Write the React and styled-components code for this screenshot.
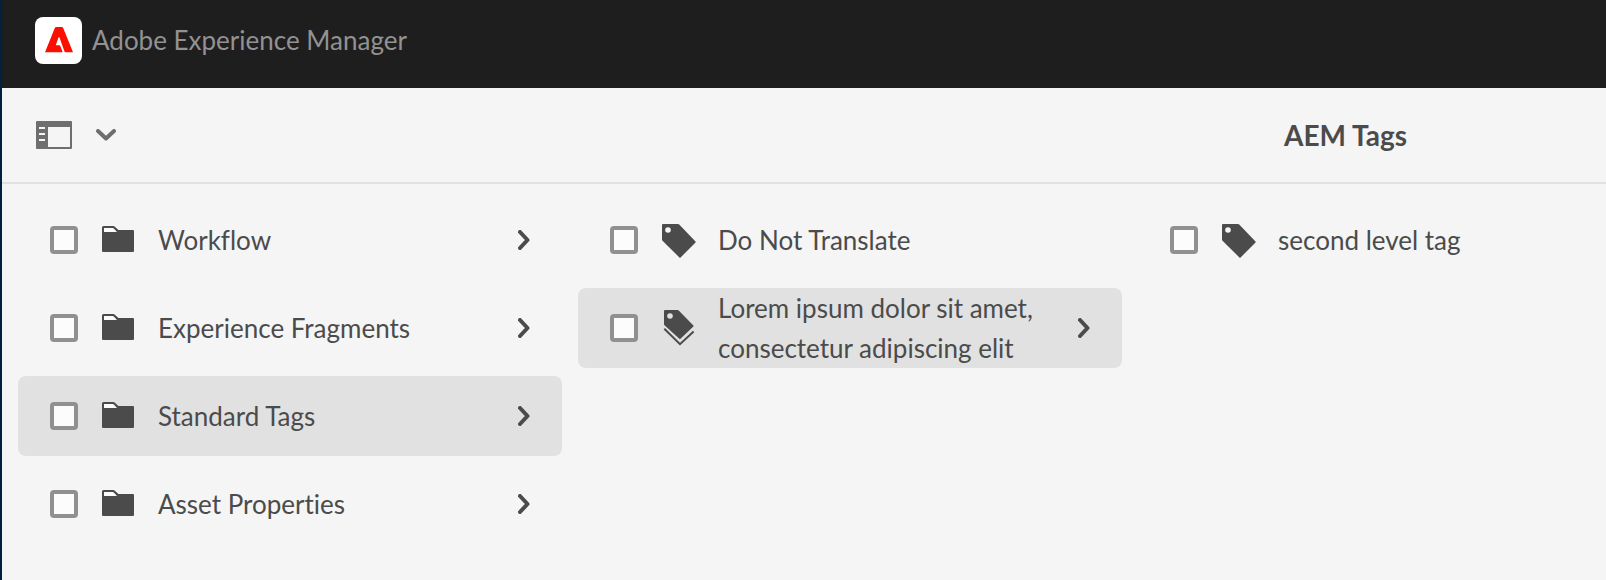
import React from "react";
import styled, { createGlobalStyle } from "styled-components";

const GlobalStyle = createGlobalStyle`
  * { box-sizing: border-box; }
  body {
    margin: 0;
    background: #f5f5f5;
    color: #4b4b4b;
    font-family: Lato, "Open Sans", sans-serif;
    font-size: 26px;
    line-height: 40px;
    font-variant-ligatures: none;
  }
`;

const Shell = styled.div`
  min-height: 100vh;
  border-left: 2px solid #002142;
  overflow: hidden;
`;

const Header = styled.header`
  display: flex;
  align-items: center;
  height: 88px;
  padding: 0 33px 8px;
  background: #1e1e1e;
`;

const HomeLink = styled.a`
  display: flex;
  align-items: center;
  gap: 10px;
  color: #929292;
  text-decoration: none;
  white-space: nowrap;
`;

const LogoSvg = styled.svg`
  flex: none;
  width: 47px;
  height: 47px;
`;

const Toolbar = styled.div`
  display: flex;
  align-items: center;
  justify-content: space-between;
  height: 96px;
  padding: 0 199px 0 34px;
  border-bottom: 2px solid #e1e1e1;
`;

const RailButton = styled.button`
  display: flex;
  align-items: center;
  gap: 24px;
  padding: 0;
  border: 0;
  background: none;
  color: #6e6e6e;
  cursor: pointer;
`;

const Title = styled.h1`
  margin: 0;
  font-size: 28px;
  font-weight: 700;
  white-space: nowrap;
`;

const Columns = styled.main`
  display: grid;
  grid-template-columns: repeat(3, 544px);
  gap: 16px;
  padding: 16px;
`;

const Column = styled.ul`
  display: flex;
  flex-direction: column;
  gap: 8px;
  margin: 0;
  padding: 0;
  list-style: none;
`;

const Item = styled.li`
  display: flex;
  align-items: center;
  min-height: 80px;
  padding: 0 32px;
  border-radius: 8px;
  background: ${(p) => (p.$selected ? "#e1e1e1" : "transparent")};
`;

const ItemLabel = styled.label`
  flex: 1;
  display: flex;
  align-items: center;
  gap: 22px;
  cursor: pointer;
`;

const Checkbox = styled.input`
  appearance: none;
  flex: none;
  width: 28px;
  height: 28px;
  margin: 0;
  border: 4px solid #909090;
  border-radius: 4px;
  background: #fcfcfc;
  &:checked { background: #909090; }
`;

const Glyph = styled.svg`
  flex: none;
  width: 36px;
  height: 36px;
  fill: currentColor;
  overflow: visible;
`;

const ExpandButton = styled.button`
  display: flex;
  flex: none;
  padding: 0;
  border: 0;
  background: none;
  color: #4b4b4b;
  cursor: pointer;
`;

const Logo = () => (
  <LogoSvg viewBox="0 0 47 47" aria-hidden="true">
    <rect width="47" height="47" rx="8" fill="#fff" />
    <path
      fill="#fa0f00"
      d="M10 35.300 19.800 11q.4-1 1.400-1h5.600q1 0 1.400 1L38 35.300h-7.400q-.8 0-1.100-.8L24.400 20.300q-.4-.8-.8 0L20.800 28.300h3.600q.6 0 .8.500l2.500 6.500Z"
    />
  </LogoSvg>
);

const RailIcon = () => (
  <svg width="36" height="28" viewBox="0 0 36 28" aria-hidden="true">
    <path
      fill="currentColor"
      fillRule="evenodd"
      d="M1 0h34a1 1 0 0 1 1 1v26a1 1 0 0 1-1 1H1a1 1 0 0 1-1-1V1a1 1 0 0 1 1-1ZM12 6v20h22V6ZM3 6v2h6V6ZM3 12v2h6v-2ZM3 18v2h6v-2Z"
    />
  </svg>
);

const ChevronDown = () => (
  <svg width="20" height="12" viewBox="0 0 20 12" aria-hidden="true">
    <path d="m2 2 8 7.5L18 2" fill="none" stroke="currentColor" strokeWidth="4" strokeLinecap="round" strokeLinejoin="round" />
  </svg>
);

const ChevronRight = () => (
  <svg width="12" height="20" viewBox="0 0 12 20" aria-hidden="true">
    <path d="m2 2 7.5 8L2 18" fill="none" stroke="currentColor" strokeWidth="4" strokeLinecap="round" strokeLinejoin="round" />
  </svg>
);

const glyphs = {
  folder: (
    <>
      <path d="M3.500 4h9.700q1 0 1.700.7L18.400 8H33a1 1 0 0 1 1 1v20a1 1 0 0 1-1 1H3a1 1 0 0 1-1-1V5.500Q2 4 3.500 4Z" />
      <path fill="#fcfcfc" d="M4 6V10H17L13.800 6.500q-.4-.5-1-.5Z" />
    </>
  ),
  tag: (
    <path
      fillRule="evenodd"
      d="M3 2h15q.7 0 1.200.5L35.500 19.400q.6.6 0 1.200L20.600 35.400q-.6.6-1.200 0L2.500 18.800Q2 18.300 2 17.600V3q0-1 1-1ZM8 5.200a2.800 2.800 0 1 0 0 5.600 2.800 2.800 0 0 0 0-5.600Z"
    />
  ),
  tags: (
    <>
      <path
        fillRule="evenodd"
        d="M5 0h12.500q.7 0 1.200.5L33.400 15.400q.6.6 0 1.200L20.500 28.800q-.6.6-1.200 0L4.500 15.300Q4 14.800 4 14.100V1q0-1 1-1ZM10 3.200a2.800 2.800 0 1 0 0 5.600 2.800 2.800 0 0 0 0-5.600Z"
      />
      <path d="M4.300 18.700 20 34.200l13.600-12.700" fill="none" stroke="currentColor" strokeWidth="2" />
    </>
  ),
};

const columns = [
  [
    { name: "Workflow", glyph: "folder", expandable: true },
    { name: "Experience Fragments", glyph: "folder", expandable: true },
    { name: "Standard Tags", glyph: "folder", expandable: true, selected: true },
    { name: "Asset Properties", glyph: "folder", expandable: true },
  ],
  [
    { name: "Do Not Translate", glyph: "tag" },
    {
      name: "Lorem ipsum dolor sit amet, consectetur adipiscing elit",
      glyph: "tags",
      expandable: true,
      selected: true,
    },
  ],
  [{ name: "second level tag", glyph: "tag" }],
];

const TagItem = ({ name, glyph, expandable, selected }) => (
  <Item $selected={selected}>
    <ItemLabel>
      <Checkbox type="checkbox" />
      <Glyph viewBox="0 0 36 36" aria-hidden="true">{glyphs[glyph]}</Glyph>
      <span>{name}</span>
    </ItemLabel>
    {expandable && (
      <ExpandButton type="button" aria-label={`Open ${name}`}>
        <ChevronRight />
      </ExpandButton>
    )}
  </Item>
);

export default function App() {
  return (
    <Shell>
      <GlobalStyle />
      <Header>
        <HomeLink href="#">
          <Logo />
          <span>Adobe Experience Manager</span>
        </HomeLink>
      </Header>
      <Toolbar>
        <RailButton type="button" aria-label="Toggle side panel">
          <RailIcon />
          <ChevronDown />
        </RailButton>
        <Title>AEM Tags</Title>
      </Toolbar>
      <Columns>
        {columns.map((items, i) => (
          <Column key={i}>
            {items.map((item) => (
              <TagItem key={item.name} {...item} />
            ))}
          </Column>
        ))}
      </Columns>
    </Shell>
  );
}
